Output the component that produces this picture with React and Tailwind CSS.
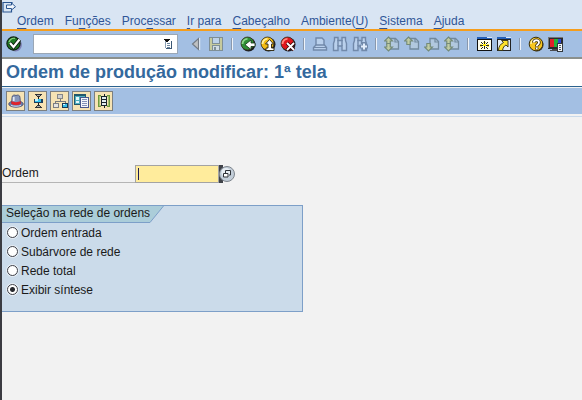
import { useState } from "react";

const menus = [
  { before: "", key: "O", after: "rdem" },
  { before: "Fu", key: "n", after: "ções" },
  { before: "Proc", key: "e", after: "ssar" },
  { before: "", key: "I", after: "r para" },
  { before: "", key: "C", after: "abeçalho" },
  { before: "Ambiente(", key: "U", after: ")" },
  { before: "", key: "S", after: "istema" },
  { before: "", key: "A", after: "juda" },
];

const options = ["Ordem entrada", "Subárvore de rede", "Rede total", "Exibir síntese"];

const Icon = ({ children, crisp }) => (
  <svg
    viewBox="0 0 16 16"
    className="h-4 w-4"
    fill="none"
    shapeRendering={crisp ? "crispEdges" : "auto"}
    aria-hidden="true"
  >
    {children}
  </svg>
);

const ToolButton = ({ label, disabled, children }) => (
  <button
    type="button"
    aria-label={label}
    title={label}
    disabled={disabled}
    className="flex h-5 w-5 shrink-0 items-center justify-center"
  >
    {children}
  </button>
);

const Separator = () => (
  <div className="flex w-3 shrink-0 justify-center">
    <div className="h-3 w-0.5 border-l border-[#8a98ad] bg-[#eef3fa]" />
  </div>
);

const AppButton = ({ label, children }) => (
  <button
    type="button"
    aria-label={label}
    title={label}
    className="flex h-5 w-[19px] shrink-0 items-center justify-center border border-[#7c7f80] bg-[#f6e3b4]"
  >
    {children}
  </button>
);

const CheckIcon = () => (
  <Icon>
    <circle cx="9.5" cy="9" r="6.4" fill="#7d7fb4" />
    <circle cx="7.5" cy="7.5" r="6.6" fill="#1f7a24" stroke="#10240f" strokeWidth="1.2" />
    <path d="M3 6a5 5 0 0 1 6-3.6" stroke="#8bd07f" strokeWidth="1.2" />
    <path d="M4 7l3.500 4L13.500 3.500" stroke="#0c1a0c" strokeWidth="4" />
    <path d="M4 7l3.500 4L13.500 3.500" stroke="#fff" strokeWidth="2.2" />
  </Icon>
);

const ListIcon = () => (
  <svg viewBox="0 0 9 10" className="h-2.5 w-[9px]" shapeRendering="crispEdges" aria-hidden="true">
    <path d="M1 1h6v8H1z" fill="#fff" />
    <path d="M7 2h1v8H2V9h5z" fill="#3c5875" />
    <path d="M1 2h1v7H1z" fill="#8ba0b5" />
    <path d="M0 0h6v1H5v1H4v1H2V2H1V1H0z" fill="#111" />
    <path d="M3 4h3v1H3zM3 6h3v1H3zM3 8h3v1H3z" fill="#6d87a1" />
  </svg>
);

const TriangleIcon = () => (
  <Icon>
    <path d="M10.5 2.500v11L4.500 8z" fill="#bfc1c2" stroke="#737b85" strokeWidth="1.2" />
    <path d="M11.700 2v12" stroke="#e8eef5" />
  </Icon>
);

const SaveIcon = () => (
  <Icon crisp>
    <path d="M1 1h14v14H1z" fill="#7f8f96" />
    <path d="M2 2h2v12H2zM12 2h2v12h-2zM4 8h8v1H4z" fill="#c6ca9d" />
    <path d="M5 2h6v5H5z" fill="#bdd2ea" />
    <path d="M5 10h6v4H5z" fill="#cfdbe4" />
    <path d="M6 11h2v3H6z" fill="#7f8f96" />
  </Icon>
);

const Ball = ({ fill, shine, children }) => (
  <Icon>
    <circle cx="8.5" cy="8.5" r="7" fill="#1b1b20" />
    <circle cx="7.500" cy="7.500" r="6.500" fill={fill} stroke="#3a3420" strokeWidth="0.8" />
    <path d="M2.500 8a5 5 0 0 1 5-5.200" stroke={shine} strokeWidth="1.8" />
    {children}
  </Icon>
);

const BackIcon = () => (
  <Ball fill="#2f8f35" shine="#8fd58c">
    <path d="M15 7v3.500h-4V13.500L5 8.700l6-4.700V7z" fill="#fff" stroke="#123012" strokeWidth="0.8" />
  </Ball>
);

const ExitIcon = () => (
  <Ball fill="#f2bb13" shine="#fff0a0">
    <path d="M9.500 3.500l4 4.500h-2v4H14v2.500H6V12h2V8H5.500z" fill="#fff" stroke="#2b2208" strokeWidth="0.9" />
  </Ball>
);

const CancelIcon = () => (
  <Ball fill="#e0161c" shine="#ff8a80">
    <path d="M7 7l7 7M14 7l-7 7" stroke="#3b0508" strokeWidth="3.4" />
    <path d="M7 7l7 7M14 7l-7 7" stroke="#fff" strokeWidth="1.8" />
  </Ball>
);

const PrintIcon = () => (
  <Icon>
    <path d="M4 9V2h6l2 2v5" fill="#b9d0ec" stroke="#7189aa" strokeWidth="1.4" />
    <path d="M4 9h8.500l2 2.500V14H1.500v-2.500z" fill="#b9d0ec" stroke="#7189aa" strokeWidth="1.4" />
    <path d="M2 11.500h12" stroke="#7189aa" />
  </Icon>
);

const binoculars = "M2.500 1.500h3.500v3h4v-3h3.500v3l1 3v7h-4.500v-4.500h-4v4.500H1.500v-7l1-3z";

const FindIcon = () => (
  <Icon>
    <path d={binoculars} fill="#b9d0ec" stroke="#7189aa" strokeWidth="1.4" />
    <path d="M6 4v6M10 4v6" stroke="#7189aa" strokeWidth="1.4" />
  </Icon>
);

const FindNextIcon = () => (
  <Icon>
    <path d={binoculars} fill="#b9d0ec" stroke="#7189aa" strokeWidth="1.4" />
    <path d="M6 4v6M9.500 4v4" stroke="#7189aa" strokeWidth="1.4" />
    <path d="M12 6v9M7.500 10.500H16" stroke="#7189aa" strokeWidth="4" />
    <path d="M12 7.500v6M9 10.500h6" stroke="#e3eefb" strokeWidth="2" />
  </Icon>
);

const PageIcon = ({ up, down }) => (
  <Icon>
    <path d="M6 2.500h5.500l3 3V13H6z" fill="#b1c8de" stroke="#728a9e" strokeWidth="1.3" />
    <path d="M11 2.500V6h3.500" stroke="#728a9e" strokeWidth="1.2" />
    {up && (
      <path d="M4.500 1L8.500 5H6.200v3.500H2.800V5H.5z" fill="#c0cca4" stroke="#748a78" strokeWidth="1.1" />
    )}
    {down && (
      <path d="M2.800 7.500h3.400V11h2.300L4.500 15 .5 11h2.300z" fill="#c0cca4" stroke="#748a78" strokeWidth="1.1" />
    )}
  </Icon>
);

const SessionIcon = () => (
  <Icon crisp>
    <path d="M1 1h15v14H1z" fill="#111" />
    <path d="M2 4h13v10H2z" fill="#fffef0" />
    <path d="M1 1h15v2H1z" fill="#2560b8" />
    <path d="M11 1h5v1h-5z" fill="#dce9f8" />
    <path
      d="M8 5h1v3H8zM8 10h1v3H8zM4 9h3v1H4zM10 9h3v1h-3zM5 6h1v1H5zM6 7h1v1H6zM11 6h1v1h-1zM10 7h1v1h-1zM5 12h1v1H5zM6 11h1v1H6zM11 12h1v1h-1zM10 11h1v1h-1z"
      fill="#2a2a10"
    />
    <path d="M7 8h3v2H7z" fill="#ffe600" />
    <path d="M7 6h1v1H7zM9 6h1v1H9zM4 8h2v1H4zM11 8h2v1h-2zM4 10h2v1H4zM11 10h2v1h-2z" fill="#f5e34a" />
  </Icon>
);

const ShortcutIcon = () => (
  <Icon>
    <path d="M1 1h14v14H1z" fill="#222" />
    <path d="M2 4h12v10H2z" fill="#e3ebf4" />
    <path d="M1 1h14v2H1z" fill="#2560b8" />
    <path d="M10 1h5v1h-5z" fill="#dce9f8" />
    <path
      d="M5.500 4.500H12V11l-2-2c-2 1-3 2.500-3.500 5.500h-4c0-4 2-6.500 5-8z"
      fill="#ffe32b"
      stroke="#2d2b12"
      strokeWidth="0.9"
    />
  </Icon>
);

const HelpIcon = () => (
  <Icon>
    <circle cx="9" cy="9" r="6.5" fill="#3a3320" />
    <circle cx="8" cy="8" r="6.8" fill="#f7c51e" stroke="#3c310e" />
    <path d="M3 8a5 5 0 0 1 4-4.800" stroke="#fff3ab" strokeWidth="1.4" />
    <path d="M5.800 6.500C6 3.500 11 3.500 11 6.500c0 2-2.300 2-2.300 4M8.700 11.500v2" stroke="#2c230a" strokeWidth="3.4" />
    <path d="M5.800 6.500C6 3.500 11 3.500 11 6.500c0 2-2.300 2-2.300 3.800M8.700 11.500v1.800" stroke="#fff" strokeWidth="1.8" />
  </Icon>
);

const LayoutIcon = () => (
  <Icon crisp>
    <path d="M0 1h15v12H0z" fill="#2a2a2c" />
    <path d="M0 1h15v1H0zM0 1h1v11H0z" fill="#777" />
    <path d="M2 3h4v8H2z" fill="#e3202a" />
    <path d="M6 3h4v8H6z" fill="#21b33a" />
    <path d="M10 3h3v8h-3z" fill="#2d49d2" />
    <path d="M4 13h6v1H4zM2 14h8v1H2z" fill="#4b4b4f" />
    <path d="M9 7h6v9H9z" fill="#33383d" />
    <path d="M10 8h4v7h-4z" fill="#f4f6f8" />
    <path d="M11 9h2v1h-2zM11 11h2v1h-2zM11 13h2v1h-2z" fill="#4d5966" />
  </Icon>
);

const HatIcon = () => (
  <Icon>
    <ellipse cx="8" cy="11" rx="7.3" ry="3.2" fill="#6f7fae" stroke="#3f456b" strokeWidth="0.8" />
    <path
      d="M3.500 10.500L4 4.500C4 2 6.500 1.500 8 2.500c1.500-1 4-.5 4 2l.5 6c-2 1.500-7 1.500-9 0z"
      fill="#8796ba"
      stroke="#434a6c"
      strokeWidth="0.8"
    />
    <path d="M5.700 4v4" stroke="#e3e9f5" strokeWidth="1.8" />
    <path d="M3.600 8c2 1.500 6.800 1.500 8.800 0l.4 2.800c-2.400 1.600-7.200 1.600-9.600 0z" fill="#e0242c" />
    <path d="M3 12.500c3 1 7 1 10 0" stroke="#d5dcee" />
  </Icon>
);

const OperationsIcon = () => (
  <Icon crisp>
    <path d="M5 1h7v1h-1v1h-1v1H7V3H6V2H5zM5 15h7v-1h-1v-1h-1v-1H7v1H6v1H5z" fill="#303236" />
    <path d="M7 2h3v1H7zM7 13h3v1H7z" fill="#a9a9a4" />
    <path d="M8 4h1v2H8zM8 10h1v2H8z" fill="#1c1c1c" />
    <path d="M4 6h9v4H4z" fill="#1d3f5c" />
    <path d="M5 6h6v3H5z" fill="#35c3ee" />
    <path d="M5 6h3v2H5z" fill="#c3effd" />
  </Icon>
);

const NetworkIcon = () => (
  <Icon crisp>
    <path d="M5 1h6v5H5z" fill="#85878a" />
    <path d="M6 2h4v3H6z" fill="#d0d0ce" />
    <path d="M8 6h1v2H8zM3 8h11v1H3zM3 8h1v3H3zM13 8h1v3h-1z" fill="#77797c" />
    <path d="M1 10h6v5H1z" fill="#7c7e82" />
    <path d="M2 11h4v3H2z" fill="#e4e4e2" />
    <path d="M10 10h6v5h-6z" fill="#163a58" />
    <path d="M11 11h4v3h-4z" fill="#38bfe8" />
    <path d="M11 11h2v1h-2z" fill="#d9f6ff" />
  </Icon>
);

const DocumentsIcon = () => (
  <Icon crisp>
    <path d="M0 1h12v11H0z" fill="#22576c" />
    <path d="M1 3h10v8H1z" fill="#4fb0c0" />
    <path d="M2 4h3v3H2zM2 8h3v2H2z" fill="#e7f7fa" />
    <path d="M6 4h9v11H6z" fill="#49578c" />
    <path d="M7 5h7v9H7z" fill="#f4f6fb" />
    <path d="M8 6h5v1H8zM8 8h5v1H8zM8 10h5v1H8zM8 12h5v1H8z" fill="#8290b8" />
  </Icon>
);

const ComponentsIcon = () => (
  <Icon crisp>
    <path d="M2 2h3v1H3v10h2v1H2zM14 2h-3v1h2v10h-2v1h3z" fill="#6f9a3c" />
    <path d="M3 3h2v1H4v8h1v1H3zM13 3h-2v1h1v8h-1v1h2z" fill="#a6c374" />
    <path d="M8 1h1v14H8zM5 3h6v10H5z" fill="#17242b" />
    <path d="M6 4h4v2H6zM6 7h4v2H6zM6 10h4v2H6z" fill="#e2edf0" />
  </Icon>
);

const App = () => {
  const [order, setOrder] = useState("");
  const [command, setCommand] = useState("");
  const [selected, setSelected] = useState("Exibir síntese");

  return (
    <div className="min-h-screen border-l-2 border-[#3b3c42] bg-[#f2f2f2] font-['Liberation_Sans',Arial,sans-serif] text-xs text-[#1a1a1a]">
      <header className="border-b-2 border-[#f59d1c] bg-[#d9e5f3]">
        <button type="button" aria-label="Menu da janela" className="block h-[13px] pt-px">
          <svg viewBox="0 0 14 12" className="h-3 w-3.5" fill="none" aria-hidden="true">
            <path d="M10 2.500V1.500H1v9.500h8.500V9" stroke="#2a5590" strokeWidth="1.2" />
            <path d="M4.500 4h5V2l4 3.700-4 3.300V7.500h-5z" fill="#f2f7fd" stroke="#2a5590" />
          </svg>
        </button>
        <nav className="flex h-4 gap-[11px] pl-[15px] leading-4 text-[#2f5597]">
          {menus.map((m) => (
            <button key={m.after} type="button" className="whitespace-nowrap">
              {m.before}
              <span className="underline underline-offset-[3px]">{m.key}</span>
              {m.after}
            </button>
          ))}
        </nav>
      </header>

      <div className="flex h-[26px] items-center bg-[#a3bfe3] pl-0.5">
        <ToolButton label="Avançar">
          <CheckIcon />
        </ToolButton>
        <div className="mr-2 ml-[9px] flex h-5 w-[145px] shrink-0 items-center border border-[#9aa7b6] bg-white pr-1">
          <input
            type="text"
            aria-label="Comando"
            value={command}
            onChange={(e) => setCommand(e.target.value)}
            className="min-w-0 flex-1 px-1 outline-none"
          />
          <button type="button" aria-label="Histórico">
            <ListIcon />
          </button>
        </div>
        <ToolButton label="Fechar campo">
          <TriangleIcon />
        </ToolButton>
        <ToolButton label="Gravar" disabled>
          <SaveIcon />
        </ToolButton>
        <Separator />
        <ToolButton label="Voltar">
          <BackIcon />
        </ToolButton>
        <ToolButton label="Encerrar">
          <ExitIcon />
        </ToolButton>
        <ToolButton label="Cancelar">
          <CancelIcon />
        </ToolButton>
        <Separator />
        <ToolButton label="Imprimir" disabled>
          <PrintIcon />
        </ToolButton>
        <ToolButton label="Procurar" disabled>
          <FindIcon />
        </ToolButton>
        <ToolButton label="Continuar procura" disabled>
          <FindNextIcon />
        </ToolButton>
        <Separator />
        <ToolButton label="Primeira página" disabled>
          <PageIcon up down />
        </ToolButton>
        <ToolButton label="Página anterior" disabled>
          <PageIcon up />
        </ToolButton>
        <ToolButton label="Página seguinte" disabled>
          <PageIcon down />
        </ToolButton>
        <ToolButton label="Última página" disabled>
          <PageIcon up down />
        </ToolButton>
        <Separator />
        <ToolButton label="Novo modo">
          <SessionIcon />
        </ToolButton>
        <ToolButton label="Criar atalho">
          <ShortcutIcon />
        </ToolButton>
        <Separator />
        <ToolButton label="Ajuda">
          <HelpIcon />
        </ToolButton>
        <ToolButton label="Ajustar layout">
          <LayoutIcon />
        </ToolButton>
      </div>

      <h1 className="border-t-2 border-b border-t-[#8b908d] border-b-[#2c628f] bg-white pl-1 text-lg leading-[27px] font-bold text-[#34699d]">
        Ordem de produção modificar: 1ª tela
      </h1>

      <div className="border-b border-[#c9d9ea] pt-px pb-0.5">
        <div className="flex h-[26px] items-center gap-[3px] bg-[#a3bfe3] pl-1">
          <AppButton label="Cabeçalho">
            <HatIcon />
          </AppButton>
          <AppButton label="Operações">
            <OperationsIcon />
          </AppButton>
          <AppButton label="Sequências">
            <NetworkIcon />
          </AppButton>
          <AppButton label="Documentos">
            <DocumentsIcon />
          </AppButton>
          <AppButton label="Componentes">
            <ComponentsIcon />
          </AppButton>
        </div>
      </div>

      <main className="pt-12">
        <div className="flex h-[18px]">
          <label htmlFor="order" className="w-[133px] border-b border-[#b5b5b5] leading-[17px]">
            Ordem
          </label>
          <div className="relative">
            <input
              id="order"
              type="text"
              value={order}
              onChange={(e) => setOrder(e.target.value)}
              className="block h-[18px] w-[84px] border border-[#a3a3a3] bg-[#ffec9c] px-1 caret-transparent outline-none"
            />
            <span className="absolute top-[3px] left-[3px] h-3 w-px bg-[#1d1d55]" aria-hidden="true" />
          </div>
          <button type="button" aria-label="Ajuda de pesquisa">
            <svg viewBox="0 0 16 18" className="h-[18px] w-4" fill="none" aria-hidden="true">
              <path d="M0 0h4v18H0z" fill="#3f4248" />
              <circle cx="8" cy="9" r="7.5" fill="#c3ced9" stroke="#7f868e" />
              <circle cx="7" cy="7.5" r="4.5" fill="#e8eef4" />
              <path d="M6.500 8V5.500h5v4.500H10" stroke="#2f3338" />
              <path d="M4.500 8.500H9V12H4.500z" fill="#fff" stroke="#2f3338" />
            </svg>
          </button>
        </div>

        <fieldset className="mt-[22px] h-[107px] w-[301px] max-w-full border border-l-0 border-[#7d9fc8] bg-[#cbdbea]">
          <legend className="float-left flex h-[17px] w-full">
            <span className="border-b border-[#7d9fc8] bg-[#abcdd9] pl-1 leading-[15px] whitespace-nowrap">
              Seleção na rede de ordens
            </span>
            <svg viewBox="0 0 14 17" className="h-[17px] w-3.5" aria-hidden="true">
              <path d="M0 0h13.500L0 16.500z" fill="#abcdd9" />
              <path d="M0 16.500L13.500 0" fill="none" stroke="#7d9fc8" />
            </svg>
          </legend>
          <div className="clear-both flex flex-col pl-[5px]">
            {options.map((opt) => (
              <label key={opt} className="flex h-[19px] items-center gap-[3px]">
                <input
                  type="radio"
                  name="network"
                  value={opt}
                  checked={selected === opt}
                  onChange={() => setSelected(opt)}
                  className="h-[11px] w-[11px] appearance-none rounded-full border border-[#3d3f47] bg-white ring-1 ring-[#e6edf4] checked:bg-[radial-gradient(circle,#26282e_0_2px,#fff_3px)]"
                />
                {opt}
              </label>
            ))}
          </div>
        </fieldset>
      </main>
    </div>
  );
};

export default App;
